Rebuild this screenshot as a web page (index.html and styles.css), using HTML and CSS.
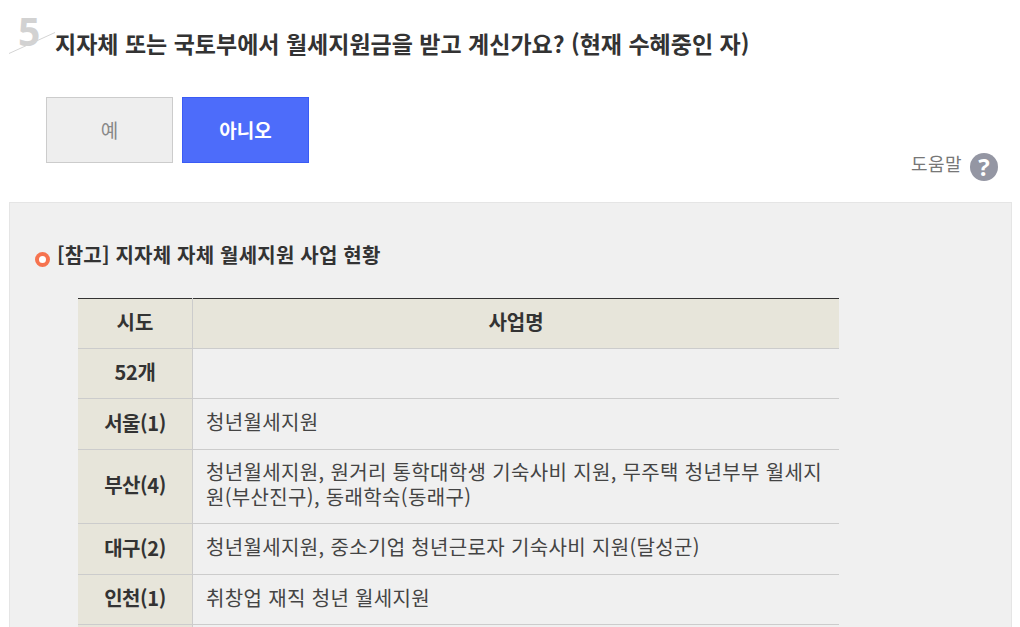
FILE: index.html
```html
<!DOCTYPE html>
<html lang="ko">
<head>
<meta charset="utf-8">
<title>월세지원</title>
<link rel="stylesheet" href="styles.css">
</head>
<body>
<div class="page">
  <div class="question">
    <span class="num">5</span>
    <svg class="slash" width="48" height="22" viewBox="0 0 48 22"><line x1="0" y1="21.5" x2="46" y2="0.5" stroke="#d4d4d4" stroke-width="1"/></svg>
    <h2 class="qtext">지자체 또는 국토부에서 월세지원금을 받고 계신가요? (현재 수혜중인 자)</h2>
  </div>
  <div class="choices">
    <div class="btn btn-off">예</div>
    <div class="btn btn-on">아니오</div>
  </div>
  <div class="help">
    <span class="help-label">도움말</span>
    <span class="help-icon">?</span>
  </div>
  <div class="panel">
    <div class="panel-title"><span class="ring"></span><span>[참고] 지자체 자체 월세지원 사업 현황</span></div>
    <table class="tbl">
      <thead>
        <tr class="r50"><th class="c1">시도</th><th class="c2">사업명</th></tr>
      </thead>
      <tbody>
        <tr class="r50"><th>52개</th><td></td></tr>
        <tr class="r51"><th>서울(1)</th><td>청년월세지원</td></tr>
        <tr class="r74"><th>부산(4)</th><td>청년월세지원, 원거리 통학대학생 기숙사비 지원, 무주택 청년부부 월세지원(부산진구), 동래학숙(동래구)</td></tr>
        <tr class="r51"><th>대구(2)</th><td>청년월세지원, 중소기업 청년근로자 기숙사비 지원(달성군)</td></tr>
        <tr class="r50"><th>인천(1)</th><td>취창업 재직 청년 월세지원</td></tr>
        <tr class="r50"><th></th><td></td></tr>
      </tbody>
    </table>
  </div>
</div>
</body>
</html>
```
FILE: styles.css
```css
html, body { margin: 0; padding: 0; background: #fff; height: 627px; overflow: hidden; }
body { font-family: "Noto Sans CJK KR", "Noto Sans", sans-serif; color: #333; }
.page { display: flex; flex-direction: column; }
.question { position: relative; height: 97px; box-sizing: border-box; padding: 27px 0 0 55px; }
.num { position: absolute; left: 18px; top: 6px; font-size: 39px; line-height: 50px; font-weight: 700; color: #d2d2d2; font-family: "Open Sans", sans-serif; }
.slash { position: absolute; left: 9px; top: 32px; }
.qtext { margin: 0; font-size: 23px; line-height: 32px; font-weight: 700; color: #333; }
.choices { display: flex; gap: 9px; padding-left: 46px; }
.btn { width: 127px; height: 66px; box-sizing: border-box; display: flex; align-items: center; justify-content: center; font-size: 19px; padding-bottom: 2px; }
.btn-off { background: #eee; border: 1px solid #ccc; color: #888; }
.btn-on { background: #4d6cfa; border: 1px solid #3a5bf5; color: #fff; font-weight: 700; }
.help { display: flex; justify-content: flex-end; align-items: center; gap: 8px; padding-right: 22px; margin-top: -11px; height: 30px; margin-bottom: 20px; }
.help-label { font-size: 18px; color: #777; letter-spacing: 0.45px; margin-top: -8px; }
.help-icon { width: 28px; height: 28px; border-radius: 50%; background: #9496a3; color: #fff; font-weight: 700; font-size: 24px; line-height: 28px; text-align: center; font-family: "Open Sans", sans-serif; }
.panel { margin: 0 8px 0 9px; border: 1px solid #e5e5e5; background: #f0f0f0; padding: 39px 0 0 25px; }
.panel-title { display: flex; align-items: center; gap: 7px; font-size: 20px; line-height: 26px; font-weight: 700; color: #333; height: 26px; letter-spacing: 0.2px; }
.ring { width: 15px; height: 15px; box-sizing: border-box; border: 4px solid #f6734f; border-radius: 50%; background: #fff; margin-top: 9px; }
.tbl { margin: 30px 0 0 43px; width: 761px; border-collapse: collapse; table-layout: fixed; border-top: 1px solid #333; font-size: 20px; }
.tbl th, .tbl td { border-bottom: 1px solid #ccc; padding: 0 0 5px; }
.tbl th { background: #e7e5da; border-right: 1px solid #ccc; font-weight: 700; font-size: 20px; color: #333; }
.tbl tbody th { letter-spacing: -0.4px; padding-bottom: 4px; }
.tbl td { padding: 0 13px 5px; line-height: 25px; color: #444; font-size: 20px; word-break: break-all; letter-spacing: 0.35px; }
.tbl thead .c2 { border-right: 0; }
.c1 { width: 114px; }
.r50 { height: 50px; }
.r51 { height: 51px; }
.r74 { height: 74px; }
```
